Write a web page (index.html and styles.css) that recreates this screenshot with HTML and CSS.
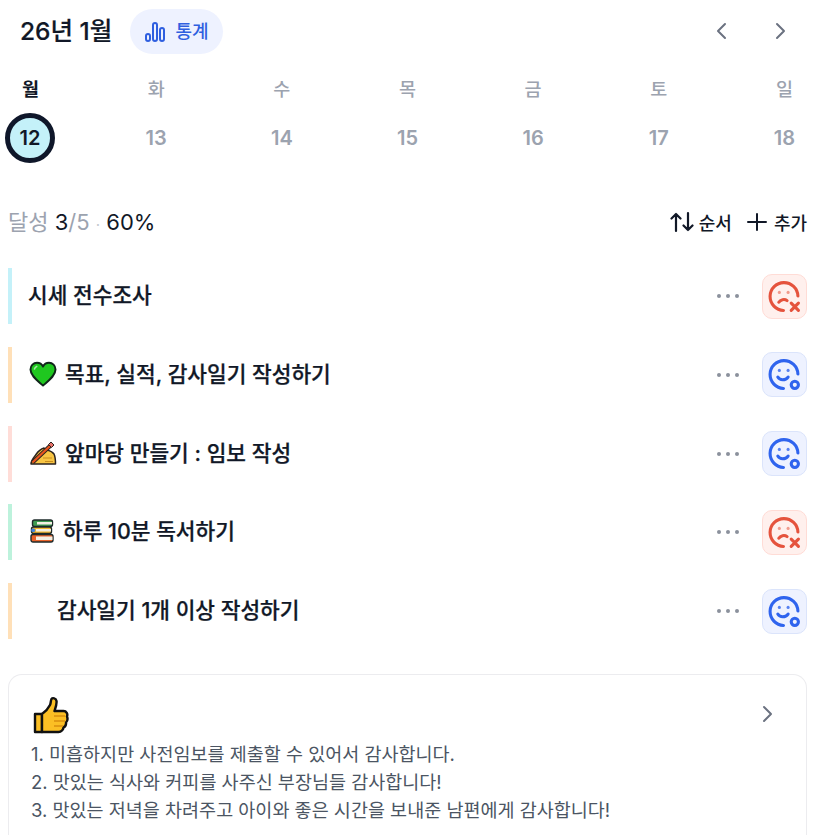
FILE: index.html
```html
<!DOCTYPE html>
<html lang="ko">
<head>
    <meta charset="UTF-8">
    <meta name="viewport" content="width=device-width, initial-scale=1.0">
    <title>목표</title>
    <link rel="stylesheet" href="styles.css">
</head>
<body>
    <svg class="defs" aria-hidden="true">
        <symbol id="face-bad" viewBox="0 0 32 32">
            <path d="M15 29.500A13.500 13.500 0 1 1 29 15.500" fill="none" stroke="currentColor" stroke-width="3" stroke-linecap="round"/>
            <circle cx="11" cy="12" r="1.500" fill="currentColor" opacity=".55"/>
            <circle cx="19.500" cy="12" r="1.500" fill="currentColor" opacity=".55"/>
            <path d="M10.500 21.500c1.500-2.500 5.500-3.500 8-1.500" fill="none" stroke="currentColor" stroke-width="3" stroke-linecap="round"/>
            <path d="M22.500 22.500l7 7M29.500 22.500l-7 7" fill="none" stroke="currentColor" stroke-width="3" stroke-linecap="round"/>
        </symbol>
        <symbol id="face-good" viewBox="0 0 32 32">
            <path d="M15 29.500A13.500 13.500 0 1 1 29 15.500" fill="none" stroke="currentColor" stroke-width="3" stroke-linecap="round"/>
            <circle cx="11" cy="12" r="1.500" fill="currentColor" opacity=".8"/>
            <circle cx="19.500" cy="12" r="1.500" fill="currentColor" opacity=".8"/>
            <path d="M9.500 18.500c2 3.500 7.500 3.500 10 0" fill="none" stroke="currentColor" stroke-width="3" stroke-linecap="round"/>
            <circle cx="26" cy="26" r="3.500" fill="none" stroke="currentColor" stroke-width="3"/>
        </symbol>
        <symbol id="chevron-left" viewBox="0 0 24 24">
            <path d="M15 5l-7 7 7 7" fill="none" stroke="currentColor" stroke-width="2" stroke-linecap="round" stroke-linejoin="round"/>
        </symbol>
        <symbol id="chevron-right" viewBox="0 0 24 24">
            <path d="M9 5l7 7-7 7" fill="none" stroke="currentColor" stroke-width="2" stroke-linecap="round" stroke-linejoin="round"/>
        </symbol>
    </svg>

    <header class="month-bar">
        <h1 class="month-title">26년 1월</h1>
        <button class="stats-pill">
            <svg class="stats-icon" viewBox="0 0 22 22">
                <rect x="2" y="13" width="4" height="7" rx="2"/>
                <rect x="9" y="2" width="4" height="18" rx="2"/>
                <rect x="16" y="7" width="4" height="13" rx="2"/>
            </svg>
            <span class="stats-label">통계</span>
        </button>
        <div class="month-nav">
            <svg class="nav-icon"><use href="#chevron-left"/></svg>
            <svg class="nav-icon"><use href="#chevron-right"/></svg>
        </div>
    </header>

    <section class="week">
        <div class="day active"><span class="day-name">월</span><span class="day-num">12</span></div>
        <div class="day"><span class="day-name">화</span><span class="day-num">13</span></div>
        <div class="day"><span class="day-name">수</span><span class="day-num">14</span></div>
        <div class="day"><span class="day-name">목</span><span class="day-num">15</span></div>
        <div class="day"><span class="day-name">금</span><span class="day-num">16</span></div>
        <div class="day"><span class="day-name">토</span><span class="day-num">17</span></div>
        <div class="day"><span class="day-name">일</span><span class="day-num">18</span></div>
    </section>

    <section class="summary">
        <p class="progress">
            <span class="muted">달성</span> <span class="strong">3</span><span class="muted">/5</span>
            <span class="sep">·</span> <span class="strong">60%</span>
        </p>
        <div class="summary-actions">
            <button class="text-btn">
                <svg class="action-icon" viewBox="0 0 24 24"><path d="M6 21V4M1.500 8.500L6 4l4.500 4.500M18 3v17M13.500 15.500L18 20l4.500-4.500" fill="none" stroke="currentColor" stroke-width="2.200" stroke-linecap="round" stroke-linejoin="round"/></svg>
                순서
            </button>
            <button class="text-btn">
                <svg class="action-icon" viewBox="0 0 24 24"><path d="M12 4v16M3 12h18" fill="none" stroke="currentColor" stroke-width="2" stroke-linecap="round"/></svg>
                추가
            </button>
        </div>
    </section>

    <ul class="goals">
        <li class="goal bar-sky">
            <span class="goal-title">시세 전수조사</span>
            <span class="dots"><i></i><i></i><i></i></span>
            <button class="mark mark-bad"><svg><use href="#face-bad"/></svg></button>
        </li>
        <li class="goal bar-orange">
            <svg class="emoji" viewBox="0 0 28 26">
                <path d="M14 24.500C9 20 1.500 15 1.500 8.500 1.500 4.500 4.500 1.800 8 1.800c2.600 0 4.800 1.300 6 3.700 1.200-2.400 3.400-3.700 6-3.700 3.500 0 6.500 2.700 6.500 6.700 0 6.500-7.500 11.500-12.500 16z" fill="#1fc71f" stroke="#10261a" stroke-width="2" stroke-linejoin="round"/>
                <path d="M5.500 8c.3-1.300 1-2.200 2.200-2.600" fill="none" stroke="#a6eda6" stroke-width="1.600" stroke-linecap="round"/>
            </svg>
            <span class="goal-title">목표, 실적, 감사일기 작성하기</span>
            <span class="dots"><i></i><i></i><i></i></span>
            <button class="mark mark-good"><svg><use href="#face-good"/></svg></button>
        </li>
        <li class="goal bar-rose">
            <svg class="emoji" viewBox="0 0 28 26">
                <path d="M2 24c0-4 3-6.500 5-9.500 2-3 4.500-5.500 8-6.500l3 2c2 .5 5 1 7 4 1.500 3 1.500 6 1.500 10z" fill="#f8c544" stroke="#2a2320" stroke-width="1.500" stroke-linejoin="round"/>
                <path d="M3.500 22.500L21 6" fill="none" stroke="#2a2320" stroke-width="4.200"/>
                <path d="M3.500 22.500L21 6" fill="none" stroke="#e8541e" stroke-width="2.400"/>
                <path d="M19.500 4.500l2.500-2.500 3 3-2.500 2.500z" fill="#e9736b" stroke="#2a2320" stroke-width="1"/>
                <path d="M14 18h9M16 21.500h8" stroke="#c98d1f" stroke-width="1.200"/>
            </svg>
            <span class="goal-title">앞마당 만들기 : 임보 작성</span>
            <span class="dots"><i></i><i></i><i></i></span>
            <button class="mark mark-good"><svg><use href="#face-good"/></svg></button>
        </li>
        <li class="goal bar-mint">
            <svg class="emoji emoji-books" viewBox="0 0 24 26">
                <rect x="2.500" y="2" width="20" height="6.500" rx="2" fill="#3f9d52" stroke="#1e2a2a" stroke-width="1.400"/>
                <rect x="7" y="4" width="15" height="2.500" fill="#f3efe3"/>
                <rect x="1.500" y="9" width="20" height="6.500" rx="2" fill="#f5b82e" stroke="#1e2a2a" stroke-width="1.400"/>
                <rect x="6" y="11" width="15" height="2.500" fill="#f3efe3"/>
                <rect x="1" y="16.500" width="22" height="7.500" rx="2" fill="#e8622a" stroke="#1e2a2a" stroke-width="1.400"/>
                <rect x="6" y="18.500" width="16.500" height="3.500" fill="#f3efe3"/>
                <rect x="1.200" y="10.500" width="4" height="3.500" rx="1.500" fill="#3f82d9"/>
            </svg>
            <span class="goal-title">하루 10분 독서하기</span>
            <span class="dots"><i></i><i></i><i></i></span>
            <button class="mark mark-bad"><svg><use href="#face-bad"/></svg></button>
        </li>
        <li class="goal bar-orange">
            <span class="goal-title goal-indent">감사일기 1개 이상 작성하기</span>
            <span class="dots"><i></i><i></i><i></i></span>
            <button class="mark mark-good"><svg><use href="#face-good"/></svg></button>
        </li>
    </ul>

    <section class="diary">
        <div class="diary-head">
            <svg class="thumb" viewBox="0 0 36 38">
                <path d="M2 18h7v18H2z" fill="#fbbf24" stroke="#111" stroke-width="2.400" stroke-linejoin="round"/>
                <path d="M9 18c3-2 6-5 8-9 1-2 .5-4 1.500-6 1-1.500 4.500-1 5 2 .5 3-1 7-2 10h9c3 0 4.500 3 3.500 5.500 1 2.500.5 4.500-1 6 .3 2.200-.8 4-2.500 5-.3 2-2 4.500-5 4.500H9z" fill="#fbbf24" stroke="#111" stroke-width="2.400" stroke-linejoin="round"/>
                <path d="M21 20h11M21 25h11M21 30h9" stroke="#d98f0e" stroke-width="1.500"/>
            </svg>
            <svg class="nav-icon diary-more"><use href="#chevron-right"/></svg>
        </div>
        <p class="diary-line">1. 미흡하지만 사전임보를 제출할 수 있어서 감사합니다.</p>
        <p class="diary-line">2. 맛있는 식사와 커피를 사주신 부장님들 감사합니다!</p>
        <p class="diary-line">3. 맛있는 저녁을 차려주고 아이와 좋은 시간을 보내준 남편에게 감사합니다!</p>
    </section>
</body>
</html>
```

FILE: styles.css
```css
html {
    height: 835px;
    overflow: hidden;
}

body {
    font-family: Inter, "Noto Sans CJK KR", sans-serif;
    margin: 0;
    height: 835px;
    display: flex;
    flex-direction: column;
    overflow: hidden;
    color: #111827;
    background: #fff;
}

button {
    font-family: inherit;
    border: none;
    background: none;
    padding: 0;
}

.defs {
    display: none;
}

.month-bar {
    display: flex;
    align-items: center;
    height: 45px;
    padding: 9px 0 0 20px;
}

.month-title {
    margin: 0 0 5px;
    font-size: 24.500px;
    font-weight: 500;
    width: 110px;
    white-space: nowrap;
    -webkit-text-stroke: 0.2px #111827;
}

.stats-pill {
    display: flex;
    align-items: center;
    justify-content: center;
    gap: 9px;
    width: 93px;
    height: 45px;
    border-radius: 23px;
    background: #eef2ff;
}

.stats-label {
    color: #2f5fe0;
    font-size: 18px;
    font-weight: 500;
    margin-bottom: 4px;
}

.stats-icon {
    width: 22px;
    height: 22px;
    fill: none;
    stroke: #2f5fe0;
    stroke-width: 2;
}

.month-nav {
    margin-left: auto;
    display: flex;
    gap: 34px;
    padding: 0 35px 2px 0;
}

.nav-icon {
    width: 24px;
    height: 24px;
    color: #6b7280;
}

.week {
    display: flex;
    justify-content: space-between;
    padding: 23px 17.500px 0 5.500px;
}

.day {
    width: 50px;
    display: flex;
    flex-direction: column;
    align-items: center;
    gap: 12px;
}

.day-name {
    font-size: 18.500px;
    line-height: 24px;
    font-weight: 500;
    color: #9ca3af;
}

.day-num {
    width: 50px;
    height: 50px;
    box-sizing: border-box;
    display: flex;
    align-items: center;
    justify-content: center;
    border-radius: 50%;
    font-size: 20px;
    font-weight: 600;
    color: #9ca3af;
}

.active .day-name {
    color: #111827;
    font-weight: 700;
}

.active .day-num {
    margin-left: -1px;
    background: #c4f1f9;
    border: 5px solid #0f172a;
    color: #111827;
}

.summary {
    display: flex;
    align-items: center;
    justify-content: space-between;
    padding: 0 20px 0 8px;
    margin-top: 40px;
    height: 34px;
}

.progress {
    margin: 0;
    font-size: 22px;
    font-weight: 400;
}

.muted {
    color: #9ca3af;
}

.strong {
    color: #111827;
}

.sep {
    color: #c4c8cf;
    font-size: 15px;
}

.summary-actions {
    display: flex;
    gap: 13px;
    margin-top: 4px;
}

.text-btn {
    display: flex;
    align-items: center;
    gap: 5px;
    font-size: 18px;
    font-weight: 500;
    color: #111827;
}

.action-icon {
    width: 24px;
    height: 24px;
}

.goals {
    list-style: none;
    margin: 31px 0 0 8px;
    padding: 0 20px 0 0;
    display: flex;
    flex-direction: column;
    gap: 22.750px;
}

.goal {
    display: flex;
    align-items: center;
    height: 56px;
    box-sizing: border-box;
    border-left: 4px solid;
    padding-left: 16px;
}

.bar-sky { border-color: #c4f1f9; }
.bar-orange { border-color: #ffe0b8; }
.bar-rose { border-color: #ffddd8; }
.bar-mint { border-color: #bdf2dc; }

.goal-title {
    margin-bottom: 5px;
    font-size: 21.400px;
    font-weight: 500;
    color: #111827;
    -webkit-text-stroke: 0.25px #111827;
}

.goal-indent {
    margin-left: 29px;
}

.emoji {
    width: 28px;
    height: 26px;
    margin-right: 8px;
    margin-left: 1px;
    margin-bottom: 2px;
}

.emoji-books {
    width: 26px;
}

.dots {
    margin-left: auto;
    display: flex;
    gap: 5px;
    margin-right: 23px;
}

.dots i {
    width: 4px;
    height: 4px;
    border-radius: 50%;
    background: #8b919c;
}

.mark {
    width: 45px;
    height: 45px;
    box-sizing: border-box;
    border-radius: 10px;
    border: 1px solid;
    display: flex;
    align-items: center;
    justify-content: center;
}

.mark svg {
    width: 33px;
    height: 33px;
}

.mark-bad {
    background: #fff0ed;
    border-color: #ffdcd6;
    color: #e5533d;
}

.mark-good {
    background: #eef2ff;
    border-color: #dbe4fb;
    color: #2f64ee;
}

.diary {
    flex: 1;
    margin: 35px 20px 0 8px;
    padding: 21px 24px 0 22px;
    border: 1px solid #ececef;
    border-bottom: none;
    border-radius: 14px 14px 0 0;
}

.diary-head {
    display: flex;
    justify-content: space-between;
    align-items: flex-start;
    height: 44px;
}

.thumb {
    width: 36px;
    height: 38px;
    margin-left: 2px;
}

.diary-more {
    margin: 6px 3px 0 0;
}

.diary-line {
    margin: 0;
    font-size: 18.500px;
    line-height: 28px;
    color: #4b5563;
    white-space: nowrap;
}
```
